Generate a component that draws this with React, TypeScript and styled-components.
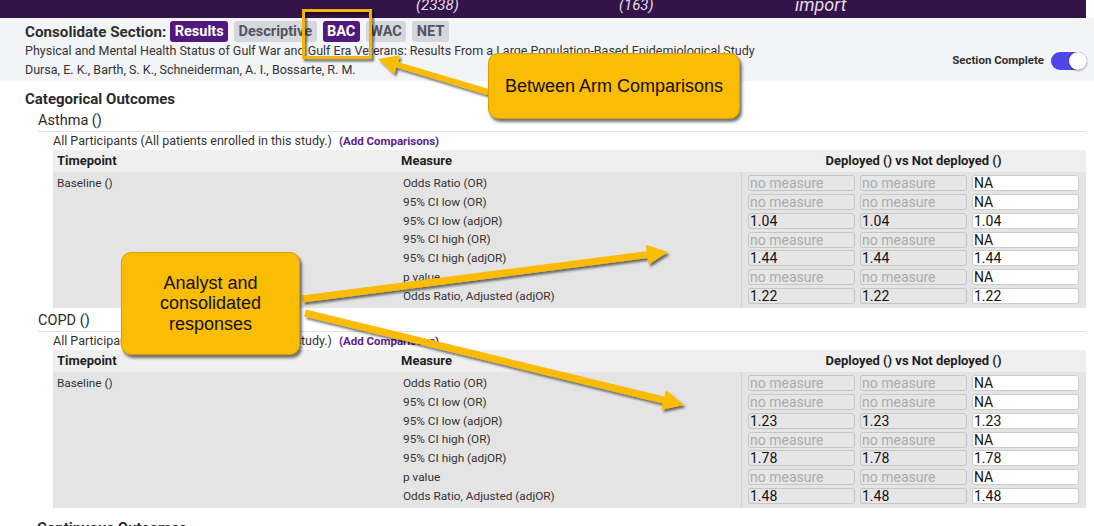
import React from 'react';
import styled, { createGlobalStyle } from 'styled-components';

const GlobalStyle = createGlobalStyle`
  html, body { margin: 0; padding: 0; background: #ffffff; }
  body { font-family: Roboto, "Noto Sans", Arial, sans-serif; color: #2e2e2e; }
  * { box-sizing: border-box; }
`;

const Page = styled.div`
  position: relative;
  width: 1094px;
  height: 526px;
  overflow: hidden;
  background: #ffffff;
`;

const TopBar = styled.div`
  width: 1086px;
  height: 18px;
  background: #341349;
  display: grid;
  grid-template-columns: 203px 176px auto;
  padding-left: 416px;
  overflow: hidden;
`;

const BarLabel = styled.span<{ $size: number }>`
  margin-top: -4px;
  font-style: italic;
  font-size: ${p => p.$size}px;
  line-height: 18px;
  color: #e2dde8;
  white-space: nowrap;
  height: 18px;
`;

const Header = styled.header`
  height: 63px;
  background: #f3f4f6;
  display: flex;
  justify-content: space-between;
  padding: 0 7px 0 25px;
`;

const HeaderLeft = styled.div`
  display: flex;
  flex-direction: column;
`;

const TagRow = styled.div`
  display: flex;
  align-items: center;
  gap: 6px;
  height: 21px;
  margin-top: 3px;
`;

const SectionLabel = styled.span`
  font-size: 15.2px;
  font-weight: 700;
  color: #2f2f2f;
  margin-right: -2px;
`;

const Tag = styled.span<{ $active?: boolean }>`
  height: 21px;
  line-height: 21px;
  padding: 0 4.5px;
  border-radius: 3px;
  font-size: 14.5px;
  font-weight: 700;
  background: ${p => (p.$active ? '#51197d' : '#d5d7dc')};
  color: ${p => (p.$active ? '#ffffff' : '#4f5562')};
`;

const StudyLine = styled.div<{ $first?: boolean }>`
  font-size: 12.5px;
  line-height: 19px;
  color: #333;
  margin-top: ${p => (p.$first ? '-1px' : '0')};
  white-space: nowrap;
`;

const HeaderRight = styled.div`
  display: flex;
  align-items: center;
  gap: 7px;
  padding-top: 33px;
  height: 52px;
`;

const CompleteLabel = styled.span`
  font-size: 11.5px;
  font-weight: 700;
  color: #2f2f2f;
  margin-top: -2px;
`;

const Toggle = styled.span`
  width: 36px;
  height: 18px;
  border-radius: 9px;
  background: #4f46e5;
  display: flex;
  justify-content: flex-end;
  align-items: center;
`;

const Knob = styled.span`
  width: 18px;
  height: 18px;
  border-radius: 50%;
  background: #ffffff;
  box-shadow: 0 1px 2px rgba(0, 0, 0, 0.35);
`;

const Main = styled.main`
  padding: 9px 8px 0 25px;
`;

const GroupTitle = styled.div`
  font-size: 15px;
  font-weight: 700;
  line-height: 19px;
  color: #2b2b2b;
`;

const Outcome = styled.section<{ $gap: number }>`
  margin: ${p => p.$gap}px 0 0 12px;
`;

const OutcomeName = styled.div`
  font-size: 14.5px;
  line-height: 19px;
  padding: 0 0 1px 1px;
  border-bottom: 1px solid #e2e2e2;
  color: #2b2b2b;
`;

const Arm = styled.div`
  margin-left: 16px;
`;

const ArmLabel = styled.div`
  font-size: 12.5px;
  line-height: 18px;
  color: #333;
  white-space: nowrap;
`;

const AddLink = styled.span`
  margin-left: 7px;
  font-size: 11.5px;
  font-weight: 700;
  color: #5a1d8f;
`;

const Table = styled.div`
  display: grid;
  grid-template-columns: 344px 344px 1fr;
`;

const HeadCell = styled.div<{ $center?: boolean }>`
  height: 22px;
  line-height: 22px;
  background: #efefef;
  font-size: 13px;
  font-weight: 700;
  color: #1f1f1f;
  padding-left: ${p => (p.$center ? '0' : '4px')};
  text-align: ${p => (p.$center ? 'center' : 'left')};
  white-space: nowrap;
`;

const BodyCell = styled.div<{ $pad: number; $divider?: boolean }>`
  background: #e4e4e4;
  padding: 2px 0 0 ${p => p.$pad}px;
  height: 136px;
  border-left: ${p => (p.$divider ? '1px solid #d3d3d3' : 'none')};
`;

const TextRow = styled.div`
  font-size: 11.8px;
  line-height: 18.75px;
  height: 18.75px;
  color: #333;
  white-space: nowrap;
`;

const FieldGrid = styled.div`
  display: grid;
  grid-template-columns: repeat(3, 107px);
  grid-auto-rows: 18.75px;
  column-gap: 5px;
  align-items: center;
`;

const Field = styled.input<{ $muted?: boolean; $editable?: boolean }>`
  width: 107px;
  height: 16px;
  margin: 0;
  padding: 0 1px;
  border: 1px solid ${p => (p.$editable ? '#cdcdcd' : '#c6c6c6')};
  border-radius: 3px;
  background: ${p => (p.$editable ? '#ffffff' : '#e6e6e6')};
  color: ${p => (p.$muted ? '#ababab' : '#111111')};
  font-family: Roboto, "Noto Sans", Arial, sans-serif;
  font-size: 14px;
  line-height: 14px;
  outline: none;
`;

const Callout = styled.div<{ $x: number; $y: number; $w: number; $h: number }>`
  position: absolute;
  left: ${p => p.$x}px;
  top: ${p => p.$y}px;
  width: ${p => p.$w}px;
  height: ${p => p.$h}px;
  background: #fbbc04;
  border: 1px solid #d99e00;
  border-radius: 10px;
  box-shadow: 2px 3px 3px rgba(0, 0, 0, 0.55);
  display: flex;
  align-items: center;
  justify-content: center;
  text-align: center;
  font-family: "Liberation Sans", Arial, sans-serif;
  font-size: 18px;
  line-height: 20.5px;
  color: #111;
`;

const Overlay = styled.svg`
  position: absolute;
  left: 0;
  top: 0;
  pointer-events: none;
`;

type Row = { label: string; values: [string, string, string] };

const NM = 'no measure';

const mk = (low: string, high: string, adj: string): Row[] => [
  { label: 'Odds Ratio (OR)', values: [NM, NM, 'NA'] },
  { label: '95% CI low (OR)', values: [NM, NM, 'NA'] },
  { label: '95% CI low (adjOR)', values: [low, low, low] },
  { label: '95% CI high (OR)', values: [NM, NM, 'NA'] },
  { label: '95% CI high (adjOR)', values: [high, high, high] },
  { label: 'p value', values: [NM, NM, 'NA'] },
  { label: 'Odds Ratio, Adjusted (adjOR)', values: [adj, adj, adj] },
];

const outcomes = [
  { name: 'Asthma ()', rows: mk('1.04', '1.44', '1.22'), gap: 2 },
  { name: 'COPD ()', rows: mk('1.23', '1.78', '1.48'), gap: 3 },
];

function arrow(x1: number, y1: number, x2: number, y2: number, shaft: number, headW: number, headL: number) {
  const dx = x2 - x1;
  const dy = y2 - y1;
  const len = Math.hypot(dx, dy);
  const ux = dx / len;
  const uy = dy / len;
  const nx = -uy;
  const ny = ux;
  const bx = x2 - ux * headL;
  const by = y2 - uy * headL;
  const s = shaft / 2;
  const h = headW / 2;
  const pts = [
    [x1 + nx * s, y1 + ny * s],
    [bx + nx * s, by + ny * s],
    [bx + nx * h, by + ny * h],
    [x2, y2],
    [bx - nx * h, by - ny * h],
    [bx - nx * s, by - ny * s],
    [x1 - nx * s, y1 - ny * s],
  ];
  return pts.map(p => `${p[0].toFixed(1)},${p[1].toFixed(1)}`).join(' ');
}

const OutcomeBlock: React.FC<{ name: string; rows: Row[]; gap: number }> = ({ name, rows, gap }) => (
  <Outcome $gap={gap}>
    <OutcomeName>{name}</OutcomeName>
    <Arm>
      <ArmLabel>
        All Participants (All patients enrolled in this study.)
        <AddLink>(Add Comparisons)</AddLink>
      </ArmLabel>
      <Table>
        <HeadCell>Timepoint</HeadCell>
        <HeadCell>Measure</HeadCell>
        <HeadCell $center>Deployed () vs Not deployed ()</HeadCell>
        <BodyCell $pad={4}>
          <TextRow>Baseline ()</TextRow>
        </BodyCell>
        <BodyCell $pad={6}>
          {rows.map(r => (
            <TextRow key={r.label}>{r.label}</TextRow>
          ))}
        </BodyCell>
        <BodyCell $pad={6} $divider>
          <FieldGrid>
            {rows.map(r =>
              r.values.map((v, i) => (
                <Field
                  key={r.label + i}
                  readOnly
                  value={v}
                  $editable={i === 2}
                  $muted={v === NM}
                />
              ))
            )}
          </FieldGrid>
        </BodyCell>
      </Table>
    </Arm>
  </Outcome>
);

export default function App() {
  return (
    <>
      <GlobalStyle />
      <Page>
        <TopBar>
          <BarLabel $size={15}>(2338)</BarLabel>
          <BarLabel $size={15}>(163)</BarLabel>
          <BarLabel $size={18}>import</BarLabel>
        </TopBar>
        <Header>
          <HeaderLeft>
            <TagRow>
              <SectionLabel>Consolidate Section:</SectionLabel>
              <Tag $active>Results</Tag>
              <Tag>Descriptive</Tag>
              <Tag $active>BAC</Tag>
              <Tag>WAC</Tag>
              <Tag>NET</Tag>
            </TagRow>
            <StudyLine $first>
              Physical and Mental Health Status of Gulf War and Gulf Era Veterans: Results From a Large Population-Based Epidemiological Study
            </StudyLine>
            <StudyLine>Dursa, E. K., Barth, S. K., Schneiderman, A. I., Bossarte, R. M.</StudyLine>
          </HeaderLeft>
          <HeaderRight>
            <CompleteLabel>Section Complete</CompleteLabel>
            <Toggle>
              <Knob />
            </Toggle>
          </HeaderRight>
        </Header>
        <Main>
          <GroupTitle>Categorical Outcomes</GroupTitle>
          {outcomes.map(o => (
            <OutcomeBlock key={o.name} name={o.name} rows={o.rows} gap={o.gap} />
          ))}
          <Outcome $gap={11} as="div">
            <GroupTitle>Continuous Outcomes</GroupTitle>
          </Outcome>
        </Main>

        <Overlay width={1094} height={526} viewBox="0 0 1094 526">
          <defs>
            <filter id="shadow" x="-10%" y="-30%" width="130%" height="170%">
              <feDropShadow dx="2" dy="2.5" stdDeviation="1.3" floodColor="#000" floodOpacity="0.55" />
            </filter>
          </defs>
          <g filter="url(#shadow)">
            <rect x={303.5} y={10.5} width={67} height={47} fill="none" stroke="#f5b400" strokeWidth={3} />
            <polygon points={arrow(488, 92, 378, 59, 6, 20, 20)} fill="#fbbc04" />
            <polygon points={arrow(302, 299, 668, 252, 7, 20, 21)} fill="#fbbc04" />
            <polygon points={arrow(305, 313, 684, 405, 7, 20, 21)} fill="#fbbc04" />
          </g>
        </Overlay>

        <Callout $x={488} $y={53} $w={252} $h={66}>Between Arm Comparisons</Callout>
        <Callout $x={121} $y={252} $w={179} $h={103}>
          Analyst and
          <br />
          consolidated
          <br />
          responses
        </Callout>
      </Page>
    </>
  );
}
